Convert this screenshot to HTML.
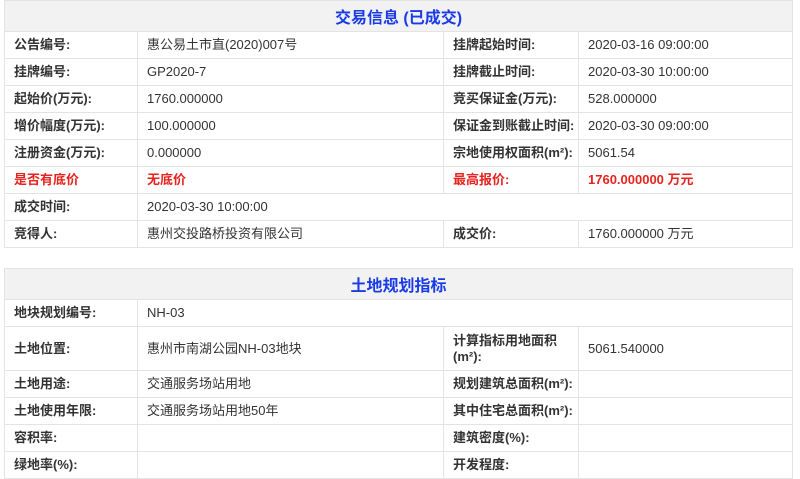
<!DOCTYPE html>
<html><head><meta charset="utf-8"><style>
body{margin:0;background:#fff;font-family:"Liberation Sans","Noto Sans CJK SC",sans-serif;font-size:13px;color:#333;}
table{position:absolute;left:4px;width:789px;border-collapse:collapse;table-layout:fixed;}
td{border:1px solid #e3e3e3;height:26px;padding:0 0 0 9px;line-height:16px;}
td.l{font-weight:bold;color:#333;}
th{height:30px;padding:0;background:#f2f2f2;border:1px solid #e3e3e3;color:#1a3be8;font-size:16px;font-weight:bold;}
.r{color:#e8231e;font-weight:bold;}
</style></head><body>
<table style="top:0">
<colgroup><col style="width:133px"><col style="width:306px"><col style="width:135px"><col></colgroup>
<tr><th colspan="4">交易信息 (已成交)</th></tr>
<tr><td class="l">公告编号:</td><td>惠公易土市直(2020)007号</td><td class="l">挂牌起始时间:</td><td>2020-03-16 09:00:00</td></tr>
<tr><td class="l">挂牌编号:</td><td>GP2020-7</td><td class="l">挂牌截止时间:</td><td>2020-03-30 10:00:00</td></tr>
<tr><td class="l">起始价(万元):</td><td>1760.000000</td><td class="l">竞买保证金(万元):</td><td>528.000000</td></tr>
<tr><td class="l">增价幅度(万元):</td><td>100.000000</td><td class="l">保证金到账截止时间:</td><td>2020-03-30 09:00:00</td></tr>
<tr><td class="l">注册资金(万元):</td><td>0.000000</td><td class="l">宗地使用权面积(m²):</td><td>5061.54</td></tr>
<tr><td class="r">是否有底价</td><td class="r">无底价</td><td class="r">最高报价:</td><td class="r">1760.000000 万元</td></tr>
<tr><td class="l">成交时间:</td><td colspan="3">2020-03-30 10:00:00</td></tr>
<tr><td class="l">竞得人:</td><td>惠州交投路桥投资有限公司</td><td class="l">成交价:</td><td>1760.000000 万元</td></tr>
</table>
<table style="top:268px">
<colgroup><col style="width:133px"><col style="width:306px"><col style="width:135px"><col></colgroup>
<tr><th colspan="4" style="height:30px">土地规划指标</th></tr>
<tr><td class="l">地块规划编号:</td><td colspan="3">NH-03</td></tr>
<tr><td class="l" style="height:43px">土地位置:</td><td>惠州市南湖公园NH-03地块</td><td class="l">计算指标用地面积(m²):</td><td>5061.540000</td></tr>
<tr><td class="l">土地用途:</td><td>交通服务场站用地</td><td class="l">规划建筑总面积(m²):</td><td></td></tr>
<tr><td class="l">土地使用年限:</td><td>交通服务场站用地50年</td><td class="l">其中住宅总面积(m²):</td><td></td></tr>
<tr><td class="l">容积率:</td><td></td><td class="l">建筑密度(%):</td><td></td></tr>
<tr><td class="l">绿地率(%):</td><td></td><td class="l">开发程度:</td><td></td></tr>
</table>
</body></html>
